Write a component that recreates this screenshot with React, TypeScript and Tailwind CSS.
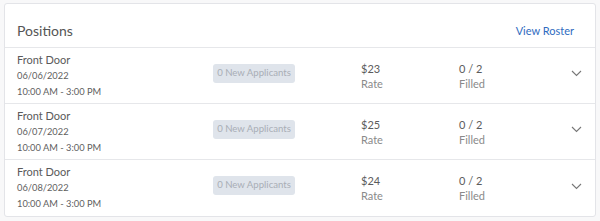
const POSITIONS = [
  { name: "Front Door", date: "06/06/2022", time: "10:00 AM - 3:00 PM", rate: "$23", filled: "0 / 2" },
  { name: "Front Door", date: "06/07/2022", time: "10:00 AM - 3:00 PM", rate: "$25", filled: "0 / 2" },
  { name: "Front Door", date: "06/08/2022", time: "10:00 AM - 3:00 PM", rate: "$24", filled: "0 / 2" },
];

const Chevron = () => (
  <svg width="11" height="7" viewBox="0 0 11 7" fill="none" className="text-[#777]">
    <path d="M1 1l4.5 4.5L10 1" stroke="currentColor" strokeWidth="1.1" />
  </svg>
);

export default function App() {
  return (
    <div className="w-[600px] h-[221px] bg-[#f8f8f9] pt-[3px] pl-[4px] font-['Lato','Open_Sans',sans-serif]">
      <div className="w-[592px] bg-white border border-[#e3e4e8] rounded-[3px] text-[#5c5c5c]">
        <div className="flex items-end justify-between h-[44px] pl-[12px] pr-[21px] pb-[8px] border-b border-[#e6e7ea]">
          <span className="text-[14px] leading-[16px] text-[#555]">Positions</span>
          <span className="text-[11px] leading-[16px] text-[#2f6cbf]">View Roster</span>
        </div>
        {POSITIONS.map((p, i) => (
          <div
            key={i}
            className={`flex items-center h-[56px] pl-[12px] pr-[13px] ${i < POSITIONS.length - 1 ? "border-b border-[#e6e7ea]" : ""}`}
          >
            <div className="w-[196px] flex flex-col">
              <span className="text-[11px] leading-[16px] text-[#5a5a5a]">{p.name}</span>
              <span className="text-[9.3px] leading-[16px] text-[#606060]">{p.date}</span>
              <span className="text-[9.3px] leading-[16px] text-[#606060]">{p.time}</span>
            </div>
            <div className="w-[82px] h-[19px] mb-[5px] rounded-[3px] bg-[#dfe4eb] text-[#a9aeb6] text-[9.6px] flex items-center justify-center">
              0 New Applicants
            </div>
            <div className="w-[66px]" />
            <div className="w-[98px] flex flex-col">
              <span className="text-[11px] leading-[15px] text-[#5c5c5c]">{p.rate}</span>
              <span className="text-[11px] leading-[15px] text-[#8a8a8a]">Rate</span>
            </div>
            <div className="flex-1 flex flex-col">
              <span className="text-[11px] leading-[15px] text-[#5c5c5c]">{p.filled}</span>
              <span className="text-[11px] leading-[15px] text-[#8a8a8a]">Filled</span>
            </div>
            <div className="mb-[4px]">
              <Chevron />
            </div>
          </div>
        ))}
      </div>
    </div>
  );
}
